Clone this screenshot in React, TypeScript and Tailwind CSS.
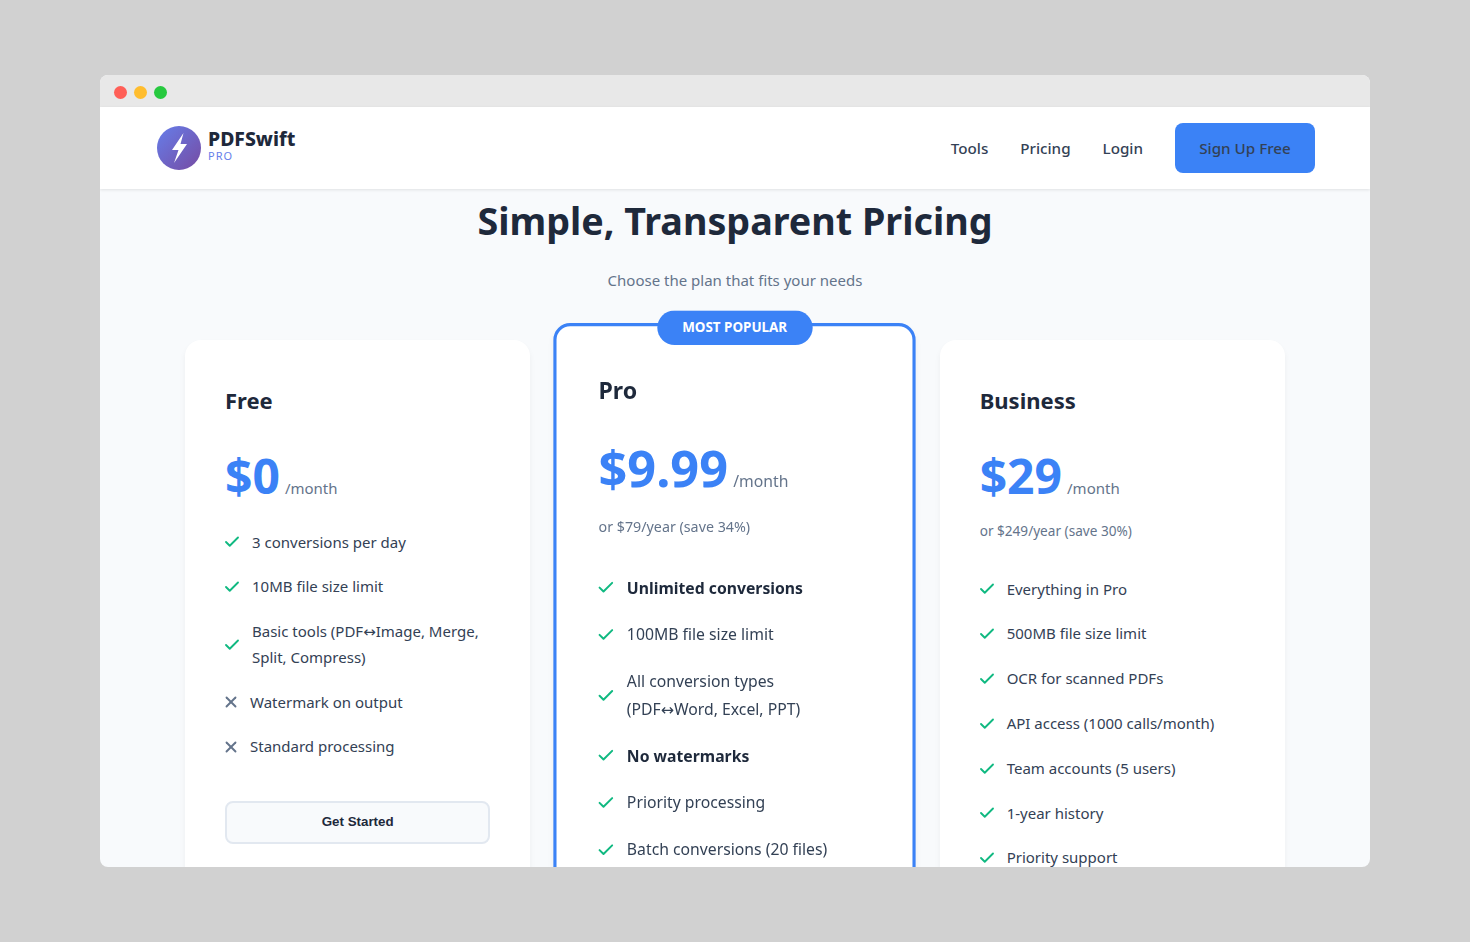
import { Check, X } from "lucide-react";

interface Feature {
  text: string;
  bold?: boolean;
  off?: boolean;
}

interface Plan {
  name: string;
  price: string;
  yearly?: string;
  features: Feature[];
  popular?: boolean;
  cta?: string;
}

const plans: Plan[] = [
  {
    name: "Free",
    price: "$0",
    cta: "Get Started",
    features: [
      { text: "3 conversions per day" },
      { text: "10MB file size limit" },
      { text: "Basic tools (PDF↔Image, Merge, Split, Compress)" },
      { text: "Watermark on output", off: true },
      { text: "Standard processing", off: true },
    ],
  },
  {
    name: "Pro",
    price: "$9.99",
    yearly: "or $79/year (save 34%)",
    popular: true,
    features: [
      { text: "Unlimited conversions", bold: true },
      { text: "100MB file size limit" },
      { text: "All conversion types\n(PDF↔Word, Excel, PPT)" },
      { text: "No watermarks", bold: true },
      { text: "Priority processing" },
      { text: "Batch conversions (20 files)" },
    ],
  },
  {
    name: "Business",
    price: "$29",
    yearly: "or $249/year (save 30%)",
    features: [
      { text: "Everything in Pro" },
      { text: "500MB file size limit" },
      { text: "OCR for scanned PDFs" },
      { text: "API access (1000 calls/month)" },
      { text: "Team accounts (5 users)" },
      { text: "1-year history" },
      { text: "Priority support" },
    ],
  },
];

// the arrow glyph is small in Noto, so it gets its own font
const FeatureText = ({ text }: { text: string }) => {
  const parts = text.split("↔");
  if (parts.length === 1) return <>{text}</>;
  return (
    <>
      {parts[0]}
      <span className="[font-family:'DejaVu_Sans',sans-serif] text-[15px] leading-none">↔</span>
      {parts[1]}
    </>
  );
};

const PlanCard = ({ plan }: { plan: Plan }) => (
  <div
    className={
      plan.popular
        ? "relative min-h-[680px] scale-[1.05] rounded-2xl border-[3px] border-[#3b82f6] bg-white p-10 shadow-[0_4px_6px_rgba(0,0,0,0.05)]"
        : "relative min-h-[680px] rounded-2xl bg-white p-10 shadow-[0_4px_6px_rgba(0,0,0,0.05)]"
    }
  >
    {plan.popular && (
      <div className="absolute left-1/2 top-[-15px] -translate-x-1/2 rounded-[20px] bg-[#3b82f6] px-6 py-[6px] text-[12.8px] leading-[21px] font-bold whitespace-nowrap text-white">
        MOST POPULAR
      </div>
    )}
    <h3 className="text-[22px] leading-[40px] font-bold text-[#1e293b]">{plan.name}</h3>
    <div className={plan.popular ? "mt-[16px] flex items-baseline" : "mt-[17px] flex items-baseline"}>
      <span className="text-5xl leading-[77px] font-bold text-[#3b82f6]">{plan.price}</span>
      <span className="ml-[5px] text-[15px] text-[#64748b]">/month</span>
    </div>
    {plan.yearly && (
      <p className={plan.popular ? "mt-[7px] text-[13.6px] leading-[22px] text-[#64748b]" : "mt-[6px] text-[13.6px] leading-[22px] text-[#64748b]"}>
        {plan.yearly}
      </p>
    )}
    <ul className={plan.yearly ? "mt-[25px]" : "mt-[6px]"}>
      {plan.features.map((f) => (
        <li key={f.text} className="flex items-center py-[9.6px] text-[15px] leading-[25.6px] text-[#334155]">
          {f.off ? (
            <X className="-ml-[3px] mr-[10px] h-[18px] w-[18px] shrink-0 text-[#64748b]" strokeWidth={2.5} />
          ) : (
            <Check className="-ml-[2px] mr-[11px] h-[18px] w-[18px] shrink-0 text-[#10b981]" strokeWidth={2.5} />
          )}
          <span className={f.bold ? "font-bold text-[#1e293b]" : "whitespace-pre-line"}>
            <FeatureText text={f.text} />
          </span>
        </li>
      ))}
    </ul>
    {plan.cta && (
      <button className="mt-[31px] h-[43px] w-full rounded-lg border-2 border-[#e2e8f0] bg-[#f8fafc] text-[13.33px] font-bold text-[#1e293b] [font-family:'Liberation_Sans',sans-serif]">
        {plan.cta}
      </button>
    )}
  </div>
);

export default function App() {
  return (
    <div className="flex min-h-[942px] items-start justify-center bg-[#d1d1d1] pt-[75px] [font-family:'Noto_Sans',sans-serif]">
      <div className="h-[792px] w-[1270px] overflow-hidden rounded-lg bg-[#f8fafc]">
        <div className="flex h-8 items-center gap-[7px] bg-[#e8e8e8] px-[13.5px] pt-[2px]">
          <span className="h-[13px] w-[13px] rounded-full bg-[#ff5f57]" />
          <span className="h-[13px] w-[13px] rounded-full bg-[#ffbd2e]" />
          <span className="h-[13px] w-[13px] rounded-full bg-[#27c93f]" />
        </div>
        <header className="flex h-[82px] items-center justify-between bg-white pl-[57px] pr-[55px] shadow-[0_1px_3px_rgba(0,0,0,0.1)]">
          <div className="flex items-center gap-[7px]">
            <div className="h-11 w-11 rounded-full bg-[linear-gradient(135deg,#667eea,#764ba2)]">
              <svg viewBox="0 0 44 44" className="h-11 w-11" fill="white">
                <path d="M26.5 7 15 24h6.5L17 37l13-19h-6.5z" />
              </svg>
            </div>
            <div className="-mt-[8px]">
              <div className="text-[19.4px] leading-[24px] font-extrabold text-[#1e293b]">PDFSwift</div>
              <div className="text-[11px] leading-[10px] tracking-[1px] text-[#667eea]">PRO</div>
            </div>
          </div>
          <nav className="flex items-center gap-8 text-[15.2px] font-medium text-[#334155]">
            <a>Tools</a>
            <a>Pricing</a>
            <a>Login</a>
            <a className="flex h-[50px] w-[140px] items-center justify-center rounded-lg bg-[#3b82f6]">Sign Up Free</a>
          </nav>
        </header>
        <main className="mx-auto w-[1100px]">
          <h1 className="text-center text-[37.7px] leading-[64px] font-bold text-[#1e293b]">Simple, Transparent Pricing</h1>
          <p className="mt-[14px] text-center text-[15px] leading-[26px] text-[#64748b]">Choose the plan that fits your needs</p>
          <div className="mt-[47px] grid grid-cols-3 gap-8">
            {plans.map((p) => (
              <PlanCard key={p.name} plan={p} />
            ))}
          </div>
        </main>
      </div>
    </div>
  );
}
